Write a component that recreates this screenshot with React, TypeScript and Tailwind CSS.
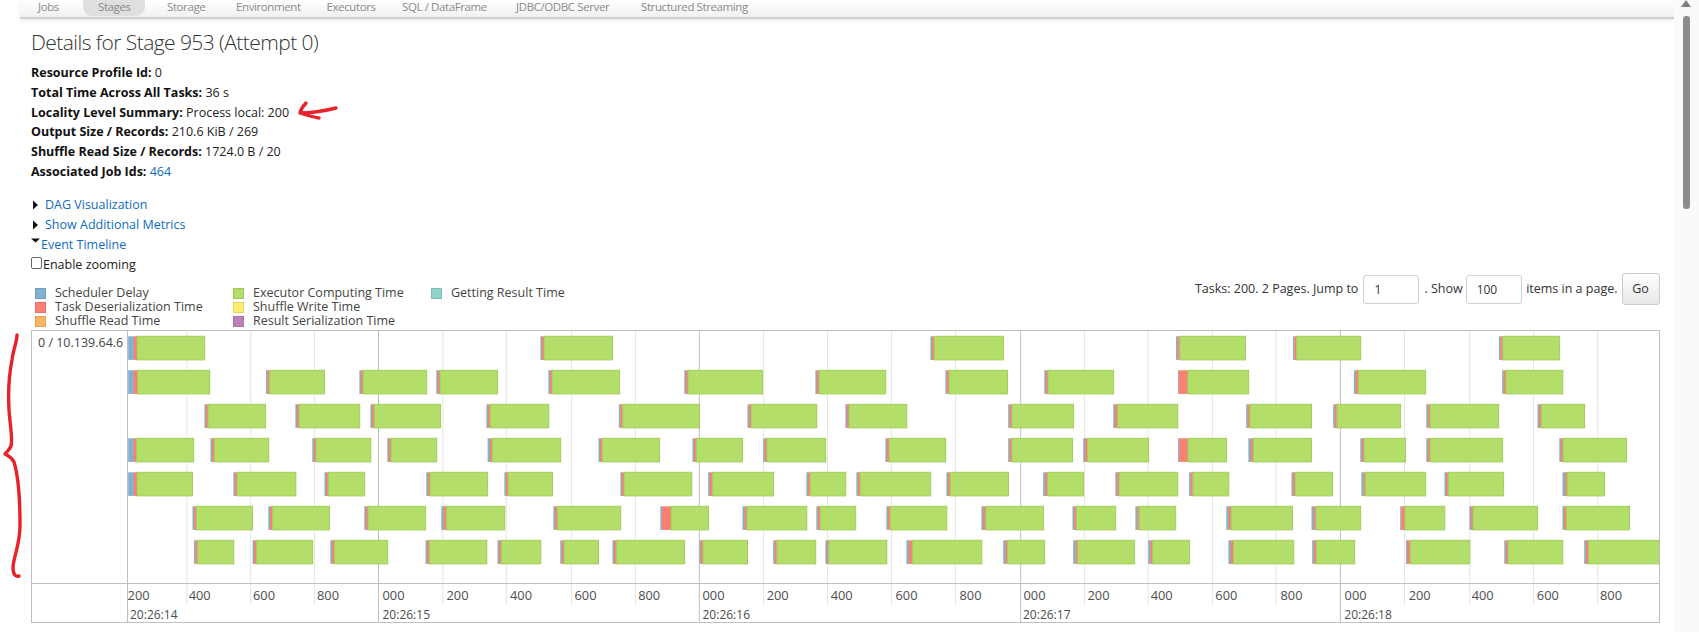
const FONT = "font-['Open_Sans','Noto_Sans',sans-serif]";

type Bar = [number, number, number?, number?];

const rows: Bar[][] = [
  [[128.2, 204.7, 5.3, 3.2], [540.4, 612.5], [930.4, 1003.6], [1176, 1245.5], [1293, 1360.7], [1499, 1559.6]],
  [[128.2, 209.7, 5.3, 3.6], [266, 324.5], [359.4, 426.7], [436.3, 497.5], [548.4, 619.6], [684.3, 762.5], [815.4, 885.7], [945.4, 1007.5], [1044.3, 1113.6], [1178.1, 1248.7, 0.6, 8.7], [1353.9, 1425.6, 1.6, 2.4], [1502.2, 1562.8]],
  [[204.4, 265.6], [295.4, 359.7], [370.4, 440.5], [486.4, 548.8], [618.9, 699.3], [747.5, 816.8], [845.4, 906.8], [1008.2, 1073.6], [1113.2, 1177.8, 1.4, 2.4], [1246.2, 1311.5], [1333.2, 1400.6], [1426.3, 1498.6], [1537.5, 1584.6]],
  [[128.2, 193.6, 5.3, 2.6], [210.5, 268.7], [312.3, 370.8], [387.3, 436.7], [487.6, 560.7, 2.2, 2], [598.5, 659.6], [692.5, 742.5], [763.2, 825.7], [885.4, 945.7], [1008.2, 1072.5], [1083.2, 1148.6, 1.6, 2.2], [1178.1, 1226.6, 1, 8.4], [1248.4, 1311.5, 2.2, 2.2], [1360.3, 1405.6], [1426.3, 1502.6], [1559.3, 1626.6]],
  [[128.2, 192.5, 5.3, 3.2], [233.4, 295.8], [324.5, 364.7], [426.3, 487.6], [504.4, 552.6], [620.4, 691.8], [708.2, 773.6, 1.4, 2.6], [806.4, 845.7], [856.4, 930.7], [946.4, 1008.6], [1043.2, 1083.6, 1.8, 2.2], [1115.4, 1177.8], [1189.2, 1228.8], [1291.5, 1332.5], [1361.4, 1425.6, 2, 1.4], [1444.5, 1503.6], [1562.5, 1604.5, 2.4, 1.8]],
  [[192.5, 252.6], [268.3, 329.5, 1.6, 2.4], [364.3, 425.6], [441.3, 504.8, 2.2, 2.4], [553.4, 620.7, 1.6, 2.2], [660.4, 708.6, 1.4, 8.9], [742.5, 806.8, 2, 2], [816.4, 855.7], [886.4, 946.8], [981.4, 1043.6, 1.6, 2.4], [1072.5, 1115.7], [1135.4, 1175.7, 1.8, 1.4], [1226.3, 1292.6, 2.2, 2.2], [1311.5, 1360.7, 2, 2], [1400.2, 1444.8, 1, 3.4], [1469.4, 1537.5], [1562.5, 1629.5]],
  [[194, 233.8], [252.6, 312.7], [330.3, 387.7, 1.6, 2], [425.6, 486.8], [497.5, 540.8], [560.3, 598.5], [612.5, 684.6], [699.3, 747.5], [773.2, 815.7], [825.4, 886.8, 1.6, 1.4], [906.4, 981.8, 2.2, 3.2], [1003.2, 1044.6, 2.2, 1.8], [1073.2, 1134.6, 2.2, 1.8], [1148.2, 1189.6, 2, 2], [1228.4, 1293.7, 2.2, 2.4], [1312.2, 1354.6, 1.6, 2], [1406, 1469.8, 1, 2.8], [1504.3, 1562.8], [1584.2, 1659.5, 1.6, 2.2]],
];

const minor = [186.8, 250.7, 314.6, 442.8, 506.3, 571.4, 635.4, 763.6, 827.5, 891.4, 955.4, 1084.6, 1148.2, 1212.4, 1276.2, 1404.5, 1469.8, 1533.6, 1597.8];
const major = [378.5, 699.3, 1020.7, 1340.4];

const tickLabels: [number, string][] = [
  [127.6, "200"], [188.7, "400"], [253, "600"], [317, "800"], [382.5, "000"], [446.5, "200"], [510, "400"], [574.5, "600"],
  [638.2, "800"], [702.5, "000"], [766.7, "200"], [830.7, "400"], [895.5, "600"], [959.5, "800"],
  [1023.5, "000"], [1087.5, "200"], [1150.7, "400"], [1215.3, "600"], [1280.5, "800"],
  [1344.6, "000"], [1408.7, "200"], [1471.7, "400"], [1536.8, "600"], [1600, "800"],
];
const secLabels: [number, string][] = [[130, "20:26:14"], [382.5, "20:26:15"], [702.5, "20:26:16"], [1023, "20:26:17"], [1344.3, "20:26:18"]];

const OX = 128;
const CHART_TOP = 331;
const AXIS_TOP = 584;

function TimelineBars() {
  return (
    <svg width={1531} height={252} className="block">
      {minor.map((x) => (
        <line key={x} x1={x - OX} x2={x - OX} y1={0} y2={252} stroke="#e5e5e5" strokeWidth={1} />
      ))}
      {major.map((x) => (
        <line key={x} x1={x - OX} x2={x - OX} y1={0} y2={252} stroke="#bfbfbf" strokeWidth={1} />
      ))}
      {rows.map((row, r) =>
        row.map(([s, e, b = 1.3, d = 2], i) => {
          const y = 336.3 + r * 34 - CHART_TOP;
          const x = s - OX;
          const greenX = x + b + d;
          return (
            <g key={`${r}-${i}`}>
              <rect x={x} y={y} width={b + 0.4} height={23.6} fill="#80b1d3" />
              <rect x={x + b} y={y} width={d + 0.4} height={23.6} fill="#fb8072" />
              <rect x={greenX} y={y} width={0.9} height={23.6} fill="#a8b868" />
              <rect x={greenX + 0.5} y={y} width={e - s - b - d - 0.5} height={23.6} fill="#b3de69" stroke="#a3cc5c" strokeWidth={1} />
            </g>
          );
        }),
      )}
    </svg>
  );
}

function TimelineAxis() {
  return (
    <svg width={1531} height={38} className="block">
      {minor.map((x) => (
        <line key={x} x1={x - OX} x2={x - OX} y1={0} y2={21} stroke="#e5e5e5" strokeWidth={1} />
      ))}
      {major.map((x) => (
        <line key={x} x1={x - OX} x2={x - OX} y1={0} y2={38} stroke="#bfbfbf" strokeWidth={1} />
      ))}
      {tickLabels.map(([x, t], i) => (
        <text key={i} x={x - OX} y={599.5 - AXIS_TOP} fontSize={13} fill="#4d4d4d" fontFamily="'Open Sans',sans-serif" textLength={22} lengthAdjust="spacingAndGlyphs">
          {t}
        </text>
      ))}
      {secLabels.map(([x, t]) => (
        <text key={t} x={x - OX} y={618.5 - AXIS_TOP} fontSize={13} fill="#4d4d4d" fontFamily="'Open Sans',sans-serif" textLength={47.5} lengthAdjust="spacingAndGlyphs">
          {t}
        </text>
      ))}
    </svg>
  );
}

function Info({ label, children }: { label: string; children: React.ReactNode }) {
  return (
    <li className="h-[19.8px] leading-[19.8px] whitespace-nowrap">
      <strong className="font-bold text-[#111]">{label}</strong> <span>{children}</span>
    </li>
  );
}

function Swatch({ color, label }: { color: string; label: string }) {
  return (
    <div className="flex h-[14px] items-center whitespace-nowrap">
      <span className={`h-[10.5px] w-[11px] border border-black/10 ${color}`} />
      <span className="ml-[9px] text-[12.5px] text-[#444]">{label}</span>
    </div>
  );
}

export default function App() {
  return (
    <div className={`${FONT} relative flex h-[632px] w-[1699px] overflow-hidden bg-white text-[12.5px] text-[#222]`}>
      <div className="w-[1674px] shrink-0">
        {/* nav */}
        <nav className="ml-[20px] flex h-[19px] items-start overflow-hidden border-b-2 border-[#d0d0d0] bg-gradient-to-b from-white to-[#f1f1f1] pl-[18px] text-[11.5px] leading-[13px] tracking-[-0.4px] text-[#8a8a8a] shadow-[0_2px_4px_rgba(0,0,0,0.08)]">
          <span className="w-[45px]">Jobs</span>
          <span className="mr-[22px] -mt-[1px] h-[17px] w-[62px] rounded-b-[9px] bg-[#dfdfdf] pl-[15px] pt-[0.5px]">Stages</span>
          <span className="w-[69px]">Storage</span>
          <span className="w-[90.5px]">Environment</span>
          <span className="w-[75.5px]">Executors</span>
          <span className="w-[114px]">SQL / DataFrame</span>
          <span className="w-[125px]">JDBC/ODBC Server</span>
          <span>Structured Streaming</span>
        </nav>

        <main className="ml-[31px] w-[1629px]">
          <h3 className="mt-[9px] text-[21px] font-light leading-[28px] tracking-[-0.56px] text-[#333]">Details for Stage 953 (Attempt 0)</h3>

          <ul className="mt-[7px]">
            <Info label="Resource Profile Id:">0</Info>
            <Info label="Total Time Across All Tasks:">36 s</Info>
            <Info label="Locality Level Summary:">Process local: 200</Info>
            <Info label="Output Size / Records:">210.6 KiB / 269</Info>
            <Info label="Shuffle Read Size / Records:">1724.0 B / 20</Info>
            <Info label="Associated Job Ids:">
              <a className="text-[#0f6cbf]">464</a>
            </Info>
          </ul>

          <div className="mt-[13.5px] text-[#0f6cbf]">
            <div className="flex h-[20px] items-center">
              <svg width="14" height="10" viewBox="0 0 14 10" className="shrink-0">
                <polygon points="2,0.5 7,5 2,9.5" fill="#111" />
              </svg>
              <a>DAG Visualization</a>
            </div>
            <div className="flex h-[20px] items-center">
              <svg width="14" height="10" viewBox="0 0 14 10" className="shrink-0">
                <polygon points="2,0.5 7,5 2,9.5" fill="#111" />
              </svg>
              <a>Show Additional Metrics</a>
            </div>
            <div className="flex h-[20px] items-center">
              <svg width="10" height="14" viewBox="0 0 10 14" className="mb-[1px] shrink-0 self-start">
                <polygon points="0,3.5 9,3.5 4.5,7.5" fill="#111" />
              </svg>
              <a>Event Timeline</a>
            </div>
          </div>
          <label className="flex h-[20px] items-center">
            <input type="checkbox" className="mb-[5px] h-[11.5px] w-[11px] appearance-none rounded-[2px] border border-[#666666] bg-white" />
            <span className="ml-[1px]">Enable zooming</span>
          </label>

          {/* legend + pagination */}
          <div className="-mt-[2px] flex h-[52.7px] items-start justify-between">
            <div className="ml-[4px] grid grid-cols-[198px_198px_198px] pt-[13.2px]">
              <Swatch color="bg-[#80b1d3]" label="Scheduler Delay" />
              <Swatch color="bg-[#b3de69]" label="Executor Computing Time" />
              <Swatch color="bg-[#8dd3c7]" label="Getting Result Time" />
              <Swatch color="bg-[#fb8072]" label="Task Deserialization Time" />
              <Swatch color="bg-[#ffed6f]" label="Shuffle Write Time" />
              <span />
              <Swatch color="bg-[#fdb462]" label="Shuffle Read Time" />
              <Swatch color="bg-[#bc80bd]" label="Result Serialization Time" />
            </div>
            <div className="mr-[0.5px] flex h-[32px] items-center whitespace-nowrap text-[12.5px] text-[#333]">
              <span>Tasks: 200. 2 Pages. Jump to</span>
              <input readOnly value="1" className="ml-[5px] h-[29px] w-[56px] rounded-[3px] border border-[#ccd0d8] px-[10px] text-[12px] outline-none" />
              <span className="ml-[5px]">. Show</span>
              <input readOnly value="100" className="ml-[3px] h-[29px] w-[56px] rounded-[3px] border border-[#ccd0d8] px-[10px] text-[12px] outline-none" />
              <span className="ml-[4.5px]">items in a page.</span>
              <button className="ml-[4px] h-[32px] w-[38px] rounded-[3px] border border-[#cccccc] bg-gradient-to-b from-white to-[#e6e6e6] text-[12.5px] text-[#333]">
                Go
              </button>
            </div>
          </div>

          {/* timeline */}
          <div className="mt-[4px] grid h-[293px] w-[1629px] grid-cols-[96px_1531px] grid-rows-[253px_38px] border border-[#bfbfbf]">
            <div className="border-b border-r border-[#bfbfbf] pl-[6px] pt-[3px] text-[12.5px] text-[#444]">0 / 10.139.64.6</div>
            <div className="border-b border-[#bfbfbf]">
              <TimelineBars />
            </div>
            <div className="border-r border-[#bfbfbf]" />
            <div>
              <TimelineAxis />
            </div>
          </div>
        </main>
      </div>

      {/* scrollbar */}
      <div className="relative flex w-[25px] shrink-0 flex-col items-center bg-[#fafafa] pr-[1px]">
        <svg width="10" height="8" viewBox="0 0 10 8" className="block">
          <polygon points="5,0 10,7 0,7" fill="#7f7f7f" />
        </svg>
        <div className="mt-[8px] h-[193px] w-[7px] rounded-[3px] bg-[#8c8c8c]" />
      </div>

      {/* hand-drawn annotations over the page */}
      <svg width="1699" height="632" className="pointer-events-none absolute left-0 top-0" fill="none" stroke="#e8222a" strokeLinecap="round" strokeLinejoin="round">
        <path d="M306 103 C303 106 301 109 300 113 C306 115 312 117 319 118 M300 113 C310 113 324 111 336 108" strokeWidth="3.4" />
        <path d="M17 335 C17 342 13 350 12 360 C9 375 8 392 9 410 C10 425 13 440 11 446 C9 451 6 452 5 454 C8 456 11 456 14 462 C18 475 20 500 20 525 C20 545 14 555 13 567 C13 574 15 577 19 576" strokeWidth="3.4" />
      </svg>
    </div>
  );
}
